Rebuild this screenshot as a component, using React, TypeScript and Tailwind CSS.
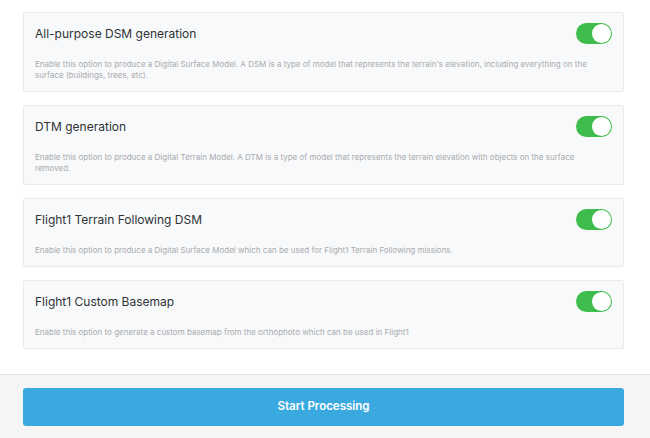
import React from "react";

const options = [
  {
    title: "All-purpose DSM generation",
    desc: "Enable this option to produce a Digital Surface Model. A DSM is a type of model that represents the terrain's elevation, including everything on the surface (buildings, trees, etc).",
  },
  {
    title: "DTM generation",
    desc: "Enable this option to produce a Digital Terrain Model. A DTM is a type of model that represents the terrain elevation with objects on the surface removed.",
  },
  {
    title: "Flight1 Terrain Following DSM",
    desc: "Enable this option to produce a Digital Surface Model which can be used for Flight1 Terrain Following missions.",
  },
  {
    title: "Flight1 Custom Basemap",
    desc: "Enable this option to generate a custom basemap from the orthophoto which can be used in Flight1",
  },
];

function Toggle() {
  return (
    <div className="w-[36px] h-[21px] rounded-full bg-[#3ebd4c] relative shrink-0">
      <div className="absolute right-[1px] top-[1px] w-[19px] h-[19px] rounded-full bg-white" />
    </div>
  );
}

export default function App() {
  return (
    <div className="w-[650px] h-[438px] bg-white flex flex-col" style={{ fontFamily: "Inter, 'Liberation Sans', sans-serif" }}>
      <div className="h-[374px] pt-[12px] pl-[23px] pr-[26px] flex flex-col gap-[13px]">
        {options.map((o) => (
          <div key={o.title} className="bg-[#f8f9fa] border border-[#e9eaec] rounded-[2px] px-[11px] pt-[10px] pb-[10px]">
            <div className="flex items-center justify-between h-[21px]">
              <span className="text-[12px] text-[#2f3236]">{o.title}</span>
              <Toggle />
            </div>
            <p className="mt-[15px] text-[8px] leading-[11px] text-[#a9abae] pr-[16px]">{o.desc}</p>
          </div>
        ))}
      </div>
      <div className="flex-1 bg-[#f5f5f5] border-t border-[#e3e3e3] pt-[13px] pl-[23px] pr-[26px]">
        <button className="w-full h-[38px] bg-[#3aa9e0] rounded-[3px] text-white text-[11.5px] font-semibold">
          Start Processing
        </button>
      </div>
    </div>
  );
}
